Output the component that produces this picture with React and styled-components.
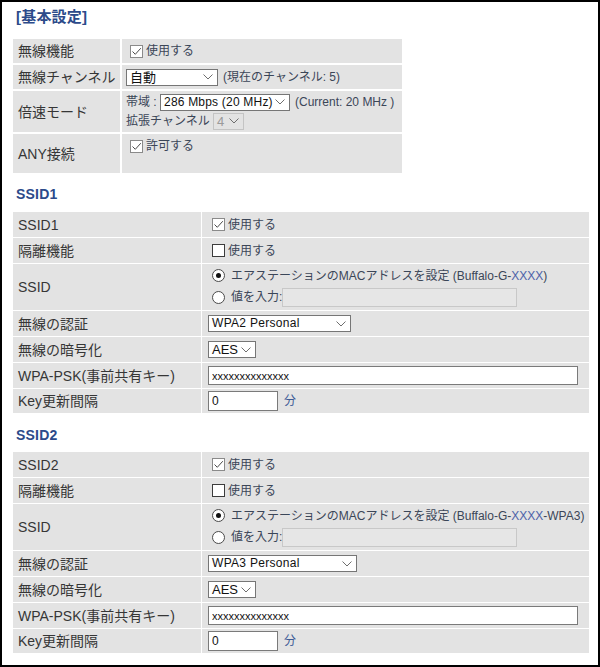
import React from "react";
import styled, { createGlobalStyle } from "styled-components";

const GlobalStyle = createGlobalStyle`
  html, body { margin: 0; padding: 0; background: #fff; }
  body {
    font-family: "Liberation Sans", Arial, "Noto Sans CJK JP", sans-serif;
    color: #333;
  }
  * { box-sizing: border-box; }
`;

const Frame = styled.div`
  width: 600px;
  height: 667px;
  border: 2px solid #000;
  padding: 5px 0 0 11px;
  overflow: hidden;
`;

const Heading = styled.div`
  font-size: ${(p) => p.$size || 14}px;
  font-weight: bold;
  color: #2c4a8a;
  line-height: 20px;
  padding-left: 3px;
  margin-top: ${(p) => p.$mt || 0}px;
  margin-bottom: ${(p) => p.$mb || 8}px;
  letter-spacing: 0.2px;
`;

const Table = styled.div`
  display: grid;
  grid-template-columns: ${(p) => p.$label}px ${(p) => p.$value}px;
  gap: ${(p) => p.$gap}px;
`;

const Label = styled.div`
  background: #e3e3e3;
  min-height: ${(p) => p.$h}px;
  display: flex;
  align-items: center;
  padding-left: 5px;
  font-size: 14px;
  line-height: 16px;
  color: #363636;
  white-space: nowrap;
`;

const Value = styled.div`
  background: #e3e3e3;
  display: flex;
  flex-direction: column;
  justify-content: ${(p) => (p.$top ? "flex-start" : "center")};
  padding-left: ${(p) => p.$pl}px;
  padding-top: ${(p) => (p.$top ? 4 : 0)}px;
  gap: ${(p) => p.$gap || 0}px;
  font-size: 12px;
  color: #3b4658;
`;

const Line = styled.div`
  display: flex;
  align-items: center;
  white-space: nowrap;
  line-height: 16px;
  height: ${(p) => p.$h || 16}px;
`;

const Box = styled.span`
  display: inline-flex;
  align-items: center;
  justify-content: center;
  width: 13px;
  height: 13px;
  margin: 3px 3px 3px 4px;
  background: #fff;
  border: 1px solid ${(p) => (p.$checked ? "#8a8a8a" : "#3c3c3c")};
  flex: none;
`;

const RadioDot = styled.span`
  display: inline-flex;
  align-items: center;
  justify-content: center;
  width: 13px;
  height: 13px;
  margin: 3px 6px 3px 4px;
  border-radius: 50%;
  background: #fff;
  border: 1px solid #4a4a4a;
  flex: none;
  &::after {
    content: "";
    width: 5px;
    height: 5px;
    border-radius: 50%;
    background: ${(p) => (p.$checked ? "#111" : "transparent")};
  }
`;

const SelectBox = styled.div`
  display: inline-flex;
  align-items: center;
  justify-content: space-between;
  width: ${(p) => p.$w}px;
  height: 17px;
  padding: 0 4px 0 3px;
  background: ${(p) => (p.$disabled ? "#e3e3e3" : "#fff")};
  border: 1px solid ${(p) => (p.$disabled ? "#c4c4c4" : "#767676")};
  color: ${(p) => (p.$disabled ? "#9a9a9a" : "#111")};
  font-family: "Liberation Sans", Arial, "Noto Sans CJK JP", sans-serif;
  font-size: ${(p) => p.$fs || 12}px;
  letter-spacing: ${(p) => p.$ls || 0}px;
  line-height: 15px;
  flex: none;
  margin-right: ${(p) => p.$mr || 0}px;
`;

const TextInput = styled.input`
  width: ${(p) => p.$w}px;
  height: ${(p) => p.$h || 19}px;
  padding: 0 3px;
  margin: 0;
  border: 1px solid ${(p) => (p.$disabled ? "#c8c8c8" : "#7a7a7a")};
  background: ${(p) => (p.$disabled ? "#e6e6e6" : "#fff")};
  font-family: "Liberation Sans", Arial, sans-serif;
  font-size: ${(p) => p.$fs || 12}px;
  color: #111;
  outline: none;
  flex: none;
`;

const Note = styled.span`
  margin-left: ${(p) => p.$ml || 0}px;
  color: ${(p) => p.$color || "#3b4658"};
`;

const Var = styled.span`
  color: #4d62a8;
`;

const Chevron = () => (
  <svg width="10" height="6" viewBox="0 0 10 6" fill="none">
    <path d="M0.5 0.5 L5 5 L9.5 0.5" stroke="#6e6e6e" strokeWidth="1" />
  </svg>
);

const Select = ({ w, text, disabled, fs, ls, mr }) => (
  <SelectBox $w={w} $disabled={disabled} $fs={fs} $ls={ls} $mr={mr}>
    <span>{text}</span>
    <Chevron />
  </SelectBox>
);

const Check = ({ checked }) => (
  <Box $checked={checked}>
    {checked && (
      <svg width="11" height="11" viewBox="0 0 11 11" fill="none">
        <path d="M1.5 5.5 L4.3 8.3 L9.8 2.2" stroke="#4a4a4a" strokeWidth="1" />
      </svg>
    )}
  </Box>
);

const SsidSection = ({ name, auth, authW, suffix }) => (
  <Table $label={188} $value={387} $gap={1}>
    <Label $h={25}>{name}</Label>
    <Value $pl={6}>
      <Line>
        <Check checked />
        使用する
      </Line>
    </Value>
    <Label $h={25}>隔離機能</Label>
    <Value $pl={6}>
      <Line>
        <Check />
        使用する
      </Line>
    </Value>
    <Label $h={46}>SSID</Label>
    <Value $pl={6} $gap={4}>
      <Line>
        <RadioDot $checked />
        エアステーションのMACアドレスを設定 (Buffalo-G-<Var>XXXX</Var>
        {suffix})
      </Line>
      <Line $h={19}>
        <RadioDot />
        値を入力:
        <TextInput $w={235} $disabled disabled defaultValue="" />
      </Line>
    </Value>
    <Label $h={25}>無線の認証</Label>
    <Value $pl={6}>
      <Line $h={17}>
        <Select w={authW} text={auth} ls={0.3} />
      </Line>
    </Value>
    <Label $h={25}>無線の暗号化</Label>
    <Value $pl={6}>
      <Line $h={17}>
        <Select w={48} text="AES" fs={13} />
      </Line>
    </Value>
    <Label $h={25}>WPA-PSK(事前共有キー)</Label>
    <Value $pl={6}>
      <Line $h={19}>
        <TextInput $w={370} $fs={11} readOnly defaultValue="xxxxxxxxxxxxxx" />
      </Line>
    </Value>
    <Label $h={24}>Key更新間隔</Label>
    <Value $pl={6}>
      <Line $h={20}>
        <TextInput $w={70} $h={20} readOnly defaultValue="0" />
        <Note $ml={6} $color="#3d5a96">
          分
        </Note>
      </Line>
    </Value>
  </Table>
);

export default function App() {
  return (
    <>
      <GlobalStyle />
      <Frame>
        <Heading $size={15} $mb={12}>
          [基本設定]
        </Heading>
        <Table $label={107} $value={280} $gap={2}>
          <Label $h={24}>無線機能</Label>
          <Value $pl={4}>
            <Line>
              <Check checked />
              使用する
            </Line>
          </Value>
          <Label $h={24}>無線チャンネル</Label>
          <Value $pl={4}>
            <Line $h={17}>
              <Select w={92} text="自動" fs={13} mr={5} />
              (現在のチャンネル: 5)
            </Line>
          </Value>
          <Label $h={41}>倍速モード</Label>
          <Value $pl={4} $gap={2}>
            <Line $h={17}>
              帯域 :&nbsp;
              <Select w={130} text="286 Mbps (20 MHz)" ls={0.2} mr={5} />
              (Current: 20 MHz )
            </Line>
            <Line $h={17}>
              拡張チャンネル&nbsp;
              <Select w={31} text="4" disabled fs={13} />
            </Line>
          </Value>
          <Label $h={39}>ANY接続</Label>
          <Value $pl={4} $top>
            <Line>
              <Check checked />
              許可する
            </Line>
          </Value>
        </Table>

        <Heading $mt={11} $mb={8}>
          SSID1
        </Heading>
        <SsidSection name="SSID1" auth="WPA2 Personal" authW={143} suffix="" />

        <Heading $mt={12} $mb={7}>
          SSID2
        </Heading>
        <SsidSection
          name="SSID2"
          auth="WPA3 Personal"
          authW={149}
          suffix="-WPA3"
        />
      </Frame>
    </>
  );
}
